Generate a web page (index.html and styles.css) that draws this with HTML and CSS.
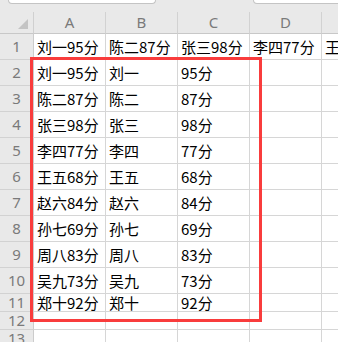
FILE: index.html
```html
<!DOCTYPE html>
<html>
<head>
<meta charset="utf-8">
<link rel="stylesheet" href="styles.css">
</head>
<body>
<div class="app">
  <div class="toolbar"><div class="namebox"></div><div class="fxbox"></div></div>
  <div class="grid">
    <div class="corner"><svg width="10" height="10" viewBox="0 0 10 10"><polygon points="10,0 10,10 0,10" fill="#c4c4c4"/></svg></div>
    <div class="ch">A</div><div class="ch">B</div><div class="ch">C</div><div class="ch">D</div><div class="ch">E</div>

    <div class="rh">1</div><div class="c">刘一95分</div><div class="c">陈二87分</div><div class="c">张三98分</div><div class="c">李四77分</div><div class="c">王五68分</div>
    <div class="rh">2</div><div class="c">刘一95分</div><div class="c">刘一</div><div class="c">95分</div><div class="c"></div><div class="c"></div>
    <div class="rh">3</div><div class="c">陈二87分</div><div class="c">陈二</div><div class="c">87分</div><div class="c"></div><div class="c"></div>
    <div class="rh">4</div><div class="c">张三98分</div><div class="c">张三</div><div class="c">98分</div><div class="c"></div><div class="c"></div>
    <div class="rh">5</div><div class="c">李四77分</div><div class="c">李四</div><div class="c">77分</div><div class="c"></div><div class="c"></div>
    <div class="rh">6</div><div class="c">王五68分</div><div class="c">王五</div><div class="c">68分</div><div class="c"></div><div class="c"></div>
    <div class="rh">7</div><div class="c">赵六84分</div><div class="c">赵六</div><div class="c">84分</div><div class="c"></div><div class="c"></div>
    <div class="rh">8</div><div class="c">孙七69分</div><div class="c">孙七</div><div class="c">69分</div><div class="c"></div><div class="c"></div>
    <div class="rh">9</div><div class="c">周八83分</div><div class="c">周八</div><div class="c">83分</div><div class="c"></div><div class="c"></div>
    <div class="rh">10</div><div class="c">吴九73分</div><div class="c">吴九</div><div class="c">73分</div><div class="c"></div><div class="c"></div>
    <div class="rh">11</div><div class="c">郑十92分</div><div class="c">郑十</div><div class="c">92分</div><div class="c"></div><div class="c"></div>
    <div class="rh rh-top">12</div><div class="c"></div><div class="c"></div><div class="c"></div><div class="c"></div><div class="c"></div>
    <div class="rh rh-top">13</div><div class="c"></div><div class="c"></div><div class="c"></div><div class="c"></div><div class="c"></div>
  </div>
  <div class="selection"></div>
</div>
</body>
</html>
```

FILE: styles.css
```css
html, body {
  margin: 0;
  padding: 0;
  width: 338px;
  height: 342px;
  overflow: hidden;
  background: #ffffff;
}
.app {
  position: relative;
  width: 338px;
  height: 342px;
  overflow: hidden;
}
.toolbar {
  display: flex;
  align-items: flex-start;
  height: 12px;
  background: #e9e9e9;
  padding-left: 8px;
  width: 420px;
}
.namebox, .fxbox {
  box-sizing: border-box;
  height: 4px;
  background: #ffffff;
  border: 1px solid #c4c4c4;
  border-top: none;
  border-radius: 0 0 5px 5px;
}
.namebox { width: 148px; }
.fxbox { width: 160px; margin-left: 97px; }
.grid {
  display: grid;
  grid-template-columns: 34px repeat(5, 72px);
  grid-template-rows: 22px repeat(10, 26px) 18px 18px 26px;
  width: max-content;
  font-family: "Noto Sans CJK SC", "Noto Sans", sans-serif;
}
.grid > div {
  box-sizing: border-box;
  border-right: 1px solid #d6d6d6;
  border-bottom: 1px solid #d6d6d6;
}
.corner {
  background: #e9e9e9;
  display: flex;
  justify-content: flex-end;
  align-items: flex-end;
  padding: 0 5px 4px 0;
}
.grid > .corner { border-right-color: #d0d0d0; border-bottom-color: #c8c8c8; }
.ch {
  background: #e9e9e9;
  color: #7a7a7a;
  font-family: "Noto Sans", sans-serif;
  font-size: 15px;
  line-height: 1;
  display: flex;
  align-items: center;
  justify-content: center;
}
.grid > .ch { border-bottom-color: #c8c8c8; border-right-color: #d2d2d2; }
.rh {
  background: #e9e9e9;
  color: #7a7a7a;
  font-family: "Noto Sans", sans-serif;
  font-size: 15px;
  line-height: 1;
  display: flex;
  align-items: center;
  justify-content: center;
}
.rh-top { align-items: flex-start; padding-top: 1px; }
.grid > .rh { border-right-color: #cccccc; border-bottom-color: #d2d2d2; }
.c {
  font-size: 15px;
  color: #000000;
  display: flex;
  align-items: center;
  padding-left: 3px;
  white-space: nowrap;
  overflow: visible;
  line-height: 1;
}
.selection {
  position: absolute;
  left: 30px;
  top: 57px;
  width: 232px;
  height: 265px;
  box-sizing: border-box;
  border: 3px solid #f93c3c;
}
```
